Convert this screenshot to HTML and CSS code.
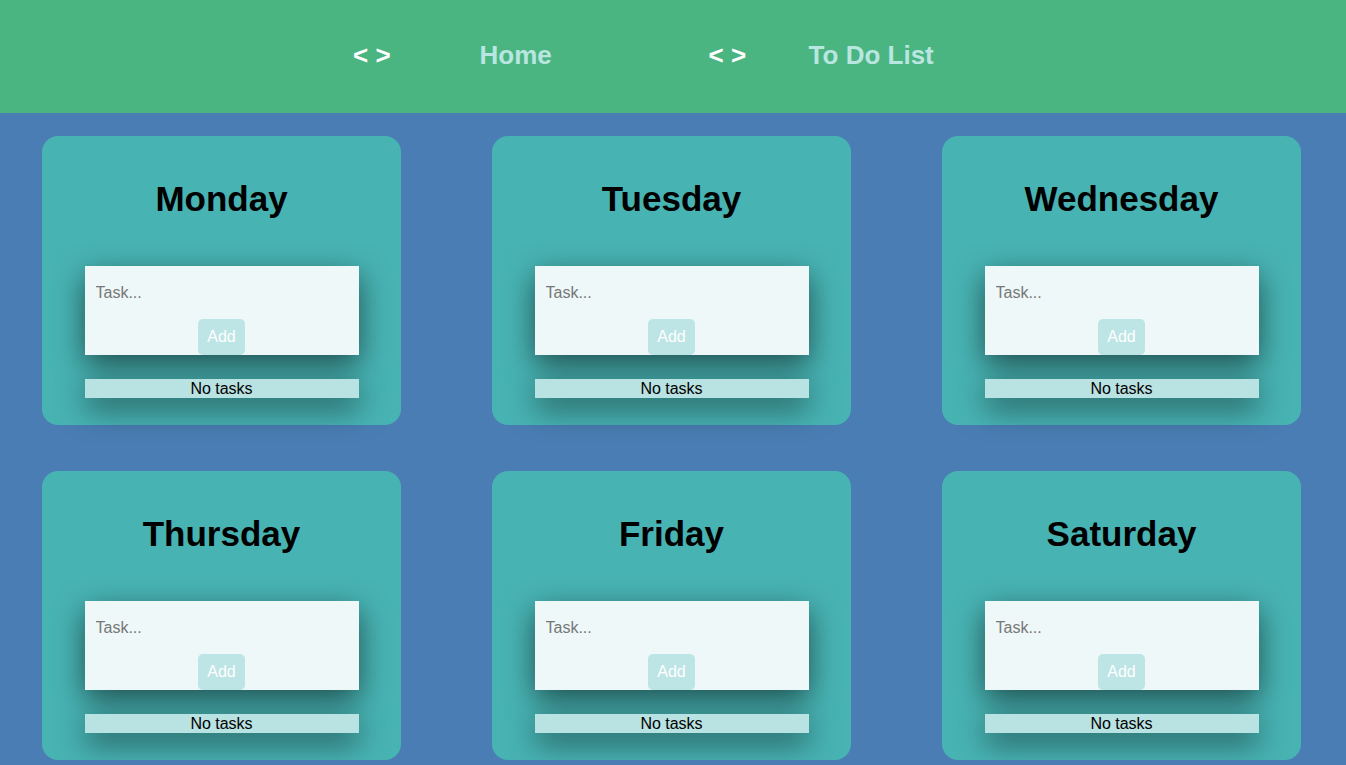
FILE: index.html
```html
<!DOCTYPE html>
<html lang="en">
<head>
<meta charset="utf-8">
<title>To Do List</title>
<link rel="stylesheet" href="styles.css">
</head>
<body>
<header class="topbar">
  <nav class="nav">
    <div class="nav-item">
      <span class="nav-icon">&lt; &gt;</span>
      <a class="nav-link nav-link-home" href="#">Home</a>
    </div>
    <div class="nav-item">
      <span class="nav-icon">&lt; &gt;</span>
      <a class="nav-link nav-link-todo" href="#">To Do List</a>
    </div>
  </nav>
</header>
<main class="week">
  <section class="day">
    <h2 class="day-title">Monday</h2>
    <form class="task-form"><input class="task-input" type="text" placeholder="Task..."><button class="add-btn" type="button">Add</button></form>
    <div class="task-list">No tasks</div>
  </section>
  <section class="day">
    <h2 class="day-title">Tuesday</h2>
    <form class="task-form"><input class="task-input" type="text" placeholder="Task..."><button class="add-btn" type="button">Add</button></form>
    <div class="task-list">No tasks</div>
  </section>
  <section class="day">
    <h2 class="day-title">Wednesday</h2>
    <form class="task-form"><input class="task-input" type="text" placeholder="Task..."><button class="add-btn" type="button">Add</button></form>
    <div class="task-list">No tasks</div>
  </section>
  <section class="day">
    <h2 class="day-title">Thursday</h2>
    <form class="task-form"><input class="task-input" type="text" placeholder="Task..."><button class="add-btn" type="button">Add</button></form>
    <div class="task-list">No tasks</div>
  </section>
  <section class="day">
    <h2 class="day-title">Friday</h2>
    <form class="task-form"><input class="task-input" type="text" placeholder="Task..."><button class="add-btn" type="button">Add</button></form>
    <div class="task-list">No tasks</div>
  </section>
  <section class="day">
    <h2 class="day-title">Saturday</h2>
    <form class="task-form"><input class="task-input" type="text" placeholder="Task..."><button class="add-btn" type="button">Add</button></form>
    <div class="task-list">No tasks</div>
  </section>
</main>
</body>
</html>
```

FILE: styles.css
```css
* { box-sizing: border-box; }
html, body { margin: 0; padding: 0; }
body {
  background: #4a7db3;
  font-family: "Liberation Sans", Arial, sans-serif;
  overflow: hidden;
}
.topbar {
  background: #4ab580;
  height: 113px;
  display: flex;
  align-items: center;
  padding-left: 353px;
  padding-bottom: 4px;
}
.nav {
  display: flex;
  gap: 93px;
}
.nav-item {
  display: flex;
  align-items: center;
}
.nav-icon {
  color: #ffffff;
  font-weight: bold;
  font-size: 26px;
  line-height: 30px;
}
.nav-link {
  color: #b9e6e0;
  font-weight: bold;
  font-size: 26px;
  line-height: 30px;
  text-decoration: none;
  text-align: center;
  width: 200px;
  margin-left: 25px;
}
.week {
  display: grid;
  grid-template-columns: repeat(3, 359px);
  column-gap: 91px;
  row-gap: 46px;
  padding: 23px 45px 0 42px;
}
.day {
  background: #48b3b3;
  border-radius: 16px;
  height: 289px;
  padding-top: 43px;
  display: flex;
  flex-direction: column;
  align-items: center;
}
.day-title {
  margin: 0;
  font-size: 35px;
  line-height: 40px;
  font-weight: bold;
  color: #000;
  text-align: center;
}
.task-form {
  margin: 47px 0 0 0;
  width: 274px;
  height: 89px;
  background: #eef8f8;
  display: flex;
  flex-direction: column;
  align-items: center;
  box-shadow: 0 10px 30px rgba(0, 0, 0, 0.55);
}
.task-input {
  width: 100%;
  height: 53px;
  border: none;
  background: transparent;
  padding: 0 11px;
  font-family: "Liberation Sans", Arial, sans-serif;
  font-size: 16px;
  color: #333;
  outline: none;
}
.task-input::placeholder { color: #777; }
.add-btn {
  width: 47px;
  height: 36px;
  border: none;
  border-radius: 5px;
  background: #bde5e5;
  color: #ffffff;
  font-family: "Liberation Sans", Arial, sans-serif;
  font-size: 16px;
  padding: 0;
}
.task-list {
  margin-top: 24px;
  width: 274px;
  height: 19px;
  background: #b9e2e2;
  color: #000;
  font-size: 16px;
  line-height: 19px;
  text-align: center;
  box-shadow: 0 10px 30px rgba(0, 0, 0, 0.55);
}
```
